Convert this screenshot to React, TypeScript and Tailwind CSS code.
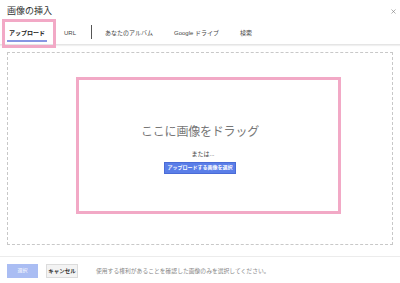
import { X } from 'lucide-react';

const font = { fontFamily: '"Liberation Sans", "Noto Sans CJK JP", sans-serif' };

export default function App() {
  const tabs = ['URL', 'あなたのアルバム', 'Google ドライブ', '検索'];

  return (
    <div className="w-[400px] h-[283px] bg-white text-[#222] overflow-hidden flex flex-col" style={font}>
      <div className="h-[20px] flex items-center justify-between pl-[7px] pr-[3px] pt-[3px]">
        <span className="text-[9px] text-[#333] leading-none">画像の挿入</span>
        <X className="w-[7px] h-[7px] text-[#777]" strokeWidth={2} />
      </div>

      <div className="h-[25px] flex items-stretch border-b border-[#e5e5e5] shadow-[0_1px_1px_rgba(0,0,0,0.06)]">
        <div className="relative ml-[7px] w-[40px] flex items-center justify-center pt-[2px] text-[6px] font-bold text-[#222]">
          アップロード
          <div className="absolute left-0 right-0 bottom-[2px] h-[2px] bg-[#8796e2]" />
          <div className="absolute left-[-5px] right-[-9px] top-[-1px] bottom-[-4px] border-[3px] border-[#f2a9c6]" />
        </div>
        <div className="ml-[17px] flex items-center pt-[2px] text-[6px] text-[#444]">URL</div>
        <div className="ml-[15px] my-[5px] w-px bg-[#555]" />
        <div className="ml-[13px] flex items-center pt-[2px] text-[6px] text-[#444]">{tabs[1]}</div>
        <div className="ml-[21px] flex items-center pt-[2px] text-[6px] text-[#444]">{tabs[2]}</div>
        <div className="ml-[21px] flex items-center pt-[2px] text-[6px] text-[#444]">{tabs[3]}</div>
      </div>

      <div className="px-[7px] pt-[7px]">
        <div className="relative h-[193px] border border-dashed border-[#c8c8c8] flex flex-col items-center">
          <div className="absolute left-[68px] top-[24px] w-[265px] h-[137px] border-[3px] border-[#f2a9c6]" />
          <div className="mt-[73px] text-[12px] text-[#777] leading-none tracking-[-0.2px]">ここに画像をドラッグ</div>
          <div className="mt-[13px] ml-[6px] text-[6px] text-[#444] leading-none">または...</div>
          <div className="mt-[5px] h-[12px] w-[72px] flex items-center justify-center bg-[#5a7ee8] border border-[#4a6bd6] text-white text-[5px] font-bold">
            アップロードする画像を選択
          </div>
        </div>
      </div>

      <div className="mt-[11px] border-t border-[#ececec] flex items-center pl-[7px] pt-[7px]">
        <div className="w-[31px] h-[14px] bg-[#aabdf3] flex items-center justify-center text-white text-[5px]">選択</div>
        <div className="ml-[8px] w-[32px] h-[14px] bg-[#f3f3f3] border border-[#dcdcdc] flex items-center justify-center text-[5.5px] font-bold text-[#333]">キャンセル</div>
        <div className="ml-[18px] text-[5.8px] text-[#888]">使用する権利があることを確認した画像のみを選択してください。</div>
      </div>
    </div>
  );
}
